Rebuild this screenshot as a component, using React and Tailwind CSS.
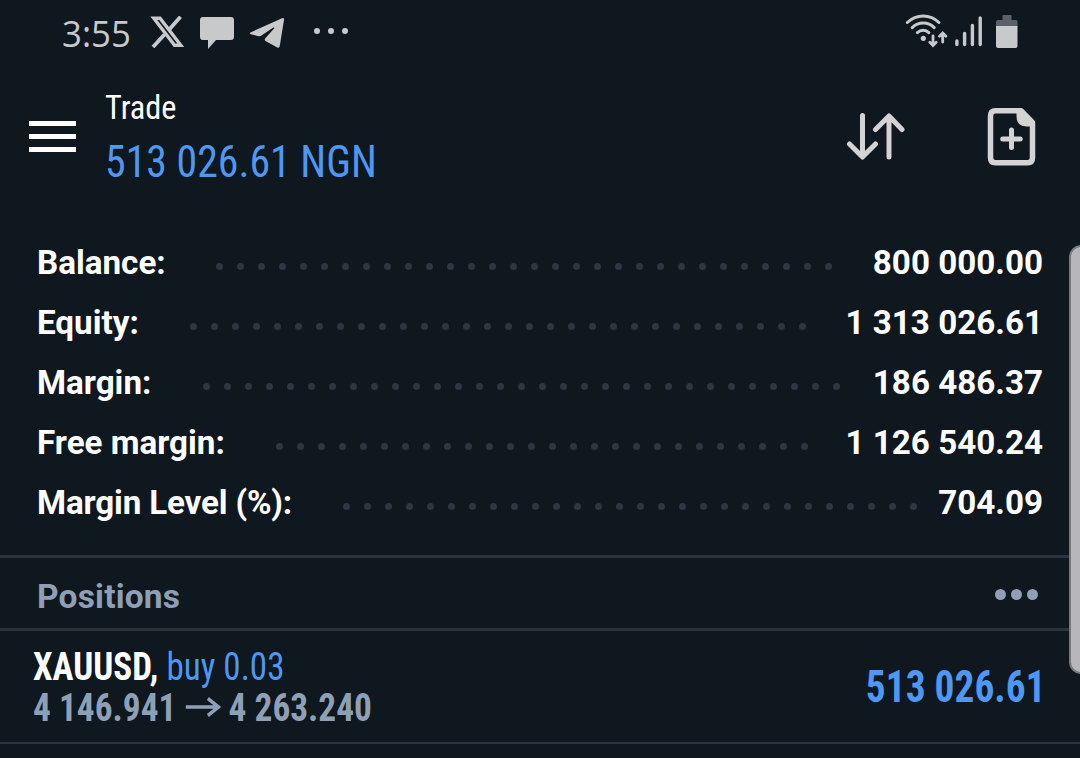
const account = [
    { label: 'Balance:', value: '800 000.00', dots: 30, width: 'w-[128px]' },
    { label: 'Equity:', value: '1 313 026.61', dots: 30, width: 'w-[102px]' },
    { label: 'Margin:', value: '186 486.37', dots: 31, width: 'w-[115px]' },
    { label: 'Free margin:', value: '1 126 540.24', dots: 26, width: 'w-[188px]' },
    { label: 'Margin Level (%):', value: '704.09', dots: 28, width: 'w-[255px] tracking-[-0.15px]' },
];

export default function App(){
    return(
        <div className="relative flex flex-col w-[1080px] h-[758px] overflow-hidden bg-[#0f171f] text-white font-['Roboto',sans-serif] whitespace-nowrap">
            <StatusBar/>
            <Header/>
            <div className="mt-[33px]">
                {account.map((row) => <AccountRow key={row.label} row={row}/>)}
            </div>
            <Positions/>
            <div className="absolute left-[1069px] top-[245px] w-[24px] h-[429px] rounded-[12px] border-2 border-[#77797d] bg-[#b7b7bb]"></div>
        </div>
    )
}

const StatusBar = () => {
    return(
        <div className="flex h-[64px] text-[#c8c9cb]">
            <span className="ml-[62px] mt-[9px] w-[70px]">
                <span className="inline-block origin-left scale-x-[0.94] text-[37px] leading-[48px] font-medium font-['Open_Sans',sans-serif]">3:55</span>
            </span>
            <svg className="ml-[18px] mt-[16px]" width="35" height="32" viewBox="0 0 35 32" fill="none" stroke="currentColor">
                <path d="M3.8 2.3h6.2l20.800 27h-6.200z" strokeWidth="3.400"/>
                <path d="M30.500.8 18.800 14M14.500 18.500 3 31" strokeWidth="3.800"/>
            </svg>
            <svg className="ml-[15px] mt-[16px]" width="34" height="34" viewBox="0 0 34 34" fill="currentColor">
                <path d="M3 1h28a3 3 0 0 1 3 3v17a3 3 0 0 1-3 3H16L8 33v-9H3a3 3 0 0 1-3-3V4a3 3 0 0 1 3-3z"/>
            </svg>
            <svg className="ml-[15px] mt-[17px]" width="36" height="32" viewBox="0 0 36 32" fill="currentColor">
                <path d="M2 15.200 33 1.200q2.400-.8 2 1.600l-4.200 26q-.6 3-3 1.400L16.500 24q-1.600-1.300-.2-2.800L25.500 11q-.3-1-1.500-.2L12.500 18.600q-2 1.200-4 .4L2 17.200q-2.500-.9 0-2z"/>
            </svg>
            <div className="flex gap-2 ml-[29px] mt-[28px]">
                <span className="size-[6px] rounded-full bg-current"></span>
                <span className="size-[6px] rounded-full bg-current"></span>
                <span className="size-[6px] rounded-full bg-current"></span>
            </div>
            <svg className="ml-auto mt-[13px]" width="43" height="35" viewBox="0 0 43 35" fill="none" stroke="currentColor" strokeWidth="3" strokeLinecap="round">
                <path d="M2.300 9.500C11.500.8 25 .8 34 9.500M7.200 14.600c6.200-6 16-6 22 0M12.300 19.600c3.500-3.200 8.500-3.200 11.500 0"/>
                <circle cx="18.300" cy="25.300" r="2.600" fill="currentColor" stroke="none"/>
                <path d="M28 23v9M24.800 29.300 28 32.500l3.200-3.200M37.700 29v-8.500M34.500 23.200l3.200-3.200 3.200 3.200" strokeWidth="2.800"/>
            </svg>
            <svg className="ml-[7px] mt-[16px]" width="28" height="32" viewBox="0 0 28 32" stroke="currentColor" strokeWidth="3.400" strokeLinecap="round">
                <path d="M1.900 25v3.500M9.600 17.500v11M17.400 9.500v19M25.200 2v26.500"/>
            </svg>
            <svg className="ml-[13px] mr-[62px] mt-[15px]" width="22" height="34" viewBox="0 0 22 34" fill="currentColor">
                <path d="M6.500 0h9v5H20q1.500 0 1.500 1.500V12H0V6.500Q0 5 1.500 5h5z" fill="#5c6068"/>
                <path d="M0 11h21.500v20q0 2-2 2H2q-2 0-2-2z"/>
            </svg>
        </div>
    )
}

const Header = () => {
    return(
        <div className="flex h-[135px]">
            <div className="flex flex-col gap-2 ml-[29px] mt-[57px] w-[47px]">
                <span className="h-[5px] bg-white"></span>
                <span className="h-[5px] bg-white"></span>
                <span className="h-[5px] bg-white"></span>
            </div>
            <div className="ml-[29px] mt-[23px] origin-left scale-x-[0.95] font-['Roboto_Condensed','Roboto'] font-stretch-condensed font-[440]">
                <div className="text-[34px] leading-[40px]">Trade</div>
                <div className="mt-[9px] text-[44px] leading-[52px] text-[#4e97f3]">513 026.61 NGN</div>
            </div>
            <svg className="ml-auto mt-[48px]" width="60" height="50" viewBox="0 0 60 50" fill="none" stroke="#d3d3d4" strokeWidth="5" strokeLinecap="round" strokeLinejoin="round">
                <path d="M16.500 3.500v41M3.500 32l13 13 13-13M43 45V4M29.500 17.500 43 4l13 13.500"/>
            </svg>
            <svg className="ml-[81px] mr-[44px] mt-[43px]" width="49" height="60" viewBox="0 0 49 60" fill="none" stroke="#d3d3d4" strokeWidth="5.500">
                <path d="M34 3.800H8.500Q3.500 3.800 3.500 8.800v42q0 5 5 5h32q5 0 5-5V15.500z" strokeLinejoin="round"/>
                <path d="M29.500 3h6l12 12v4.500h-8Q29.500 19.500 29.500 9z" fill="#d3d3d4" stroke="none"/>
                <path d="M24.500 23v17.500M15.700 32h17.500" strokeWidth="5" strokeLinecap="round"/>
            </svg>
        </div>
    )
}

const AccountRow = ({row}) => {
    return(
        <div className="flex items-center h-[60px] px-[37px] pt-[2px] text-[33.2px] font-bold">
            <span className={row.width}>{row.label}</span>
            <div className="flex gap-[14px] ml-[51px] mt-[7px]">
                {Array.from({length: row.dots}, (_, i) => <span key={i} className="size-[7px] rounded-full bg-[#2f3641]"></span>)}
            </div>
            <span className="ml-auto">{row.value}</span>
        </div>
    )
}

const Positions = () => {
    return(
        <div className="mt-[23px]">
            <div className="flex items-center justify-between h-[76px] border-y-3 border-[#2d333e] pl-[37px] pr-[42px] text-[#8fa0b6]">
                <span className="mt-[8px] text-[33.5px] tracking-[0.2px] font-bold">Positions</span>
                <div className="flex gap-[5px] mt-[2px]">
                    <span className="size-[11px] rounded-full bg-current"></span>
                    <span className="size-[11px] rounded-full bg-current"></span>
                    <span className="size-[11px] rounded-full bg-current"></span>
                </div>
            </div>
            <div className="flex items-center justify-between h-[113px] border-b-2 border-[#2d333e] pl-[33px] pr-[34px] font-['Roboto_Condensed','Roboto'] font-stretch-condensed">
                <div className="pt-[2px]">
                    <div className="origin-left scale-x-[0.922] text-[38px] leading-[41px]"><span className="font-bold">XAUUSD,</span> <span className="text-[#4e97f3] font-[440]">buy 0.03</span></div>
                    <div className="flex items-center origin-left scale-x-[0.93] text-[38px] leading-[41px] font-bold text-[#8fa0b6]">
                        <span>4 146.941</span>
                        <svg className="ml-[10px] mr-[8px]" width="38" height="22" viewBox="0 0 38 22" fill="none" stroke="currentColor" strokeWidth="3.500">
                            <path d="M0 10h35M24 1.500 35.500 10 24 18.500"/>
                        </svg>
                        <span>4 263.240</span>
                    </div>
                </div>
                <span className="mt-[3px] origin-right scale-x-[0.905] text-[43.5px] font-bold text-[#4e97f3]">513 026.61</span>
            </div>
        </div>
    )
}
